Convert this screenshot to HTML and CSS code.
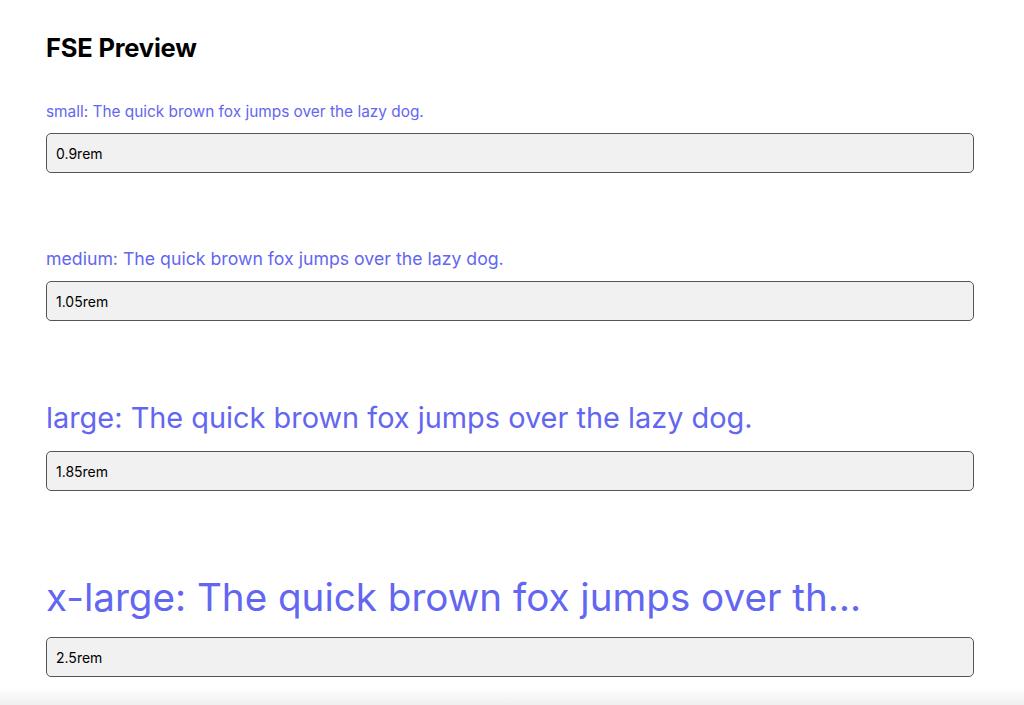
FILE: index.html
```html
<!DOCTYPE html>
<html>
<head>
<meta charset="utf-8">
<link rel="stylesheet" href="styles.css">
</head>
<body>
<main class="page">
  <h1 class="title">FSE Preview</h1>
  <section class="item item-small">
    <div class="sample">small: The quick brown fox jumps over the lazy dog.</div>
    <input class="field" type="text" value="0.9rem">
  </section>
  <section class="item item-medium">
    <div class="sample">medium: The quick brown fox jumps over the lazy dog.</div>
    <input class="field" type="text" value="1.05rem">
  </section>
  <section class="item item-large">
    <div class="sample">large: The quick brown fox jumps over the lazy dog.</div>
    <input class="field" type="text" value="1.85rem">
  </section>
  <section class="item item-xlarge">
    <div class="sample">x-large: The quick brown fox jumps over th…</div>
    <input class="field" type="text" value="2.5rem">
  </section>
</main>
<div class="fade"></div>
</body>
</html>
```
FILE: styles.css
```css
html, body {
  margin: 0;
  padding: 0;
  background: #ffffff;
}
body {
  font-family: Inter, "Liberation Sans", sans-serif;
  color: #000;
}
.page {
  padding: 30px 50px 0 46px;
  display: flex;
  flex-direction: column;
}
.title {
  font-size: 25.5px;
  font-weight: 700;
  margin: 0 0 35px 0;
  line-height: 36px;
  letter-spacing: -0.2px;
}
.item {
  display: flex;
  flex-direction: column;
}
.sample {
  color: #6366f1;
  white-space: nowrap;
}
.item-small .sample { font-size: 15.4px; line-height: 22px; margin-bottom: 10px; }
.item-medium { margin-top: 74px; }
.item-medium .sample { font-size: 17.7px; line-height: 24px; margin-bottom: 10px; }
.item-large { margin-top: 78px; }
.item-large .sample { font-size: 28.9px; line-height: 38px; margin-bottom: 14px; }
.item-xlarge { margin-top: 80px; }
.item-xlarge .sample { font-size: 38.6px; line-height: 52px; margin-bottom: 14px; }
.field {
  box-sizing: border-box;
  height: 40px;
  width: 100%;
  border: 1px solid #555;
  border-radius: 5px;
  background: #f1f1f1;
  padding: 0 9px;
  font-family: Inter, "Liberation Sans", sans-serif;
  font-size: 14px;
  color: #000;
  outline: none;
}
.fade {
  position: fixed;
  left: 0;
  right: 0;
  bottom: 0;
  height: 18px;
  background: linear-gradient(to bottom, rgba(240,240,240,0), rgba(238,238,238,0.9));
  pointer-events: none;
}
```
